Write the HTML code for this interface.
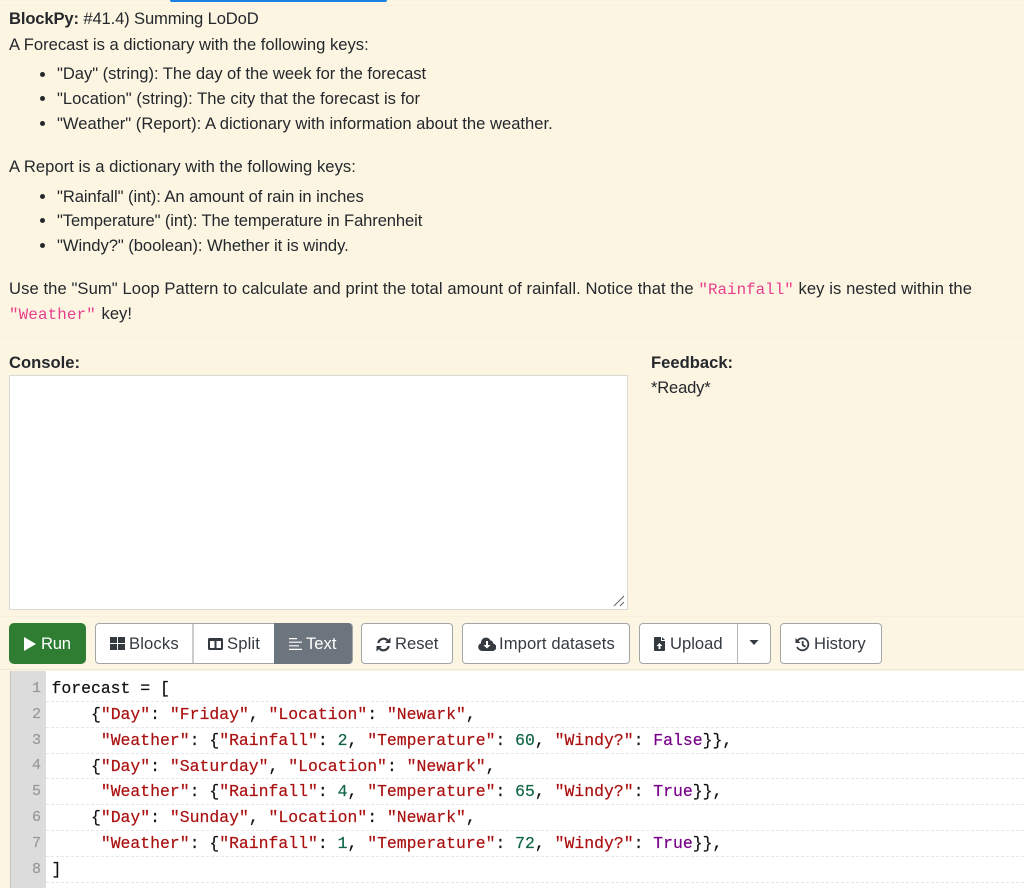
<!DOCTYPE html>
<html><head><meta charset="utf-8"><style>
html,body{margin:0;padding:0}
body{width:1024px;height:888px;position:relative;overflow:hidden;background:#fdf6e3;font-family:"Liberation Sans",sans-serif;font-size:16.6px;color:#24282c}
#bg{position:absolute;left:0;top:0;width:1024px;height:888px;background:#fcf5e2}
.t{position:absolute;white-space:pre;line-height:24px;height:24px}
.m{font-family:"Liberation Mono",monospace}
.c{color:#e83e8c;font-size:15.9px;letter-spacing:0}
.dot{position:absolute;width:5px;height:5px;border-radius:50%;background:#24282c;left:39.500px}
.hr{position:absolute;left:0;width:1024px;height:1px;background:#f8f0dc}
.btn{position:absolute;top:623px;height:41px;box-sizing:border-box;border:1px solid #a3a6a9;background:#fff;border-radius:4px}
.ln{position:absolute;left:0;width:978px;height:1px;background:repeating-linear-gradient(90deg,#e6e6e6 0 3px,#fff 3px 5px)}
.n{position:absolute;left:10px;width:31px;text-align:right;font:15px/26px "Liberation Mono",monospace;color:#999;-webkit-text-stroke:.2px #999}
.code{position:absolute;left:51.500px;white-space:pre;font:16.45px/26px "Liberation Mono",monospace;color:#111;-webkit-text-stroke:.2px currentColor}
.s{color:#a11}.i{color:#164}.k{color:#708}
</style></head><body>
<div id="bg"></div>
<div style="position:absolute;left:170px;top:0;width:217px;height:2px;background:#1a7fe0;border-radius:0 0 2px 2px"></div>
<div class="hr" style="top:5px"></div>
<div class="t" style="left:9px;top:7px;letter-spacing:-.14px"><b>BlockPy:</b> #41.4) Summing LoDoD</div>
<div class="t" style="left:9px;top:33px">A Forecast is a dictionary with the following keys:</div>
<div class="dot" style="top:71.500px"></div><div class="t" style="left:57px;top:62px;letter-spacing:-.04px">"Day" (string): The day of the week for the forecast</div>
<div class="dot" style="top:96px"></div><div class="t" style="left:57px;top:87px;letter-spacing:.02px">"Location" (string): The city that the forecast is for</div>
<div class="dot" style="top:120.500px"></div><div class="t" style="left:57px;top:112px">"Weather" (Report): A dictionary with information about the weather.</div>
<div class="t" style="left:9px;top:155px;letter-spacing:.04px">A Report is a dictionary with the following keys:</div>
<div class="dot" style="top:193.500px"></div><div class="t" style="left:57px;top:185px;letter-spacing:-.067px">"Rainfall" (int): An amount of rain in inches</div>
<div class="dot" style="top:218px"></div><div class="t" style="left:57px;top:209px;letter-spacing:-.12px">"Temperature" (int): The temperature in Fahrenheit</div>
<div class="dot" style="top:242.500px"></div><div class="t" style="left:57px;top:234px;letter-spacing:-.05px">"Windy?" (boolean): Whether it is windy.</div>
<div class="t" style="left:9px;top:277px;letter-spacing:.083px">Use the "Sum" Loop Pattern to calculate and print the total amount of rainfall. Notice that the <span class="m c">"Rainfall"</span> key is nested within the</div>
<div class="t" style="left:9px;top:302px"><span class="m c" style="letter-spacing:.12px">"Weather"</span><span style="margin-left:1px"> key!</span></div>
<div class="hr" style="top:337px"></div>
<div class="t" style="left:9px;top:351px"><b>Console:</b></div>
<div class="t" style="left:651px;top:351px"><b>Feedback:</b></div>
<div class="t" style="left:651px;top:376px;letter-spacing:-.2px">*Ready*</div>
<div style="position:absolute;left:9px;top:375px;width:619px;height:235px;box-sizing:border-box;background:#fff;border:1px solid #d8d8d4"></div>
<svg style="position:absolute;left:612px;top:594px" width="14" height="14" viewBox="0 0 14 14"><path d="M2 12L12 2M8 12L12 8" stroke="#666" stroke-width="1" fill="none"/></svg>
<div class="hr" style="top:616px"></div>

<div style="position:absolute;left:9px;top:623px;width:77px;height:41px;background:#2e7d32;border-radius:5px"></div>
<svg style="position:absolute;left:24px;top:637px" width="12" height="14" viewBox="0 0 12 14"><path d="M0 0L12 7L0 14Z" fill="#fff"/></svg>
<div class="t" style="left:41px;top:632px;color:#fff;letter-spacing:-.2px">Run</div>

<div class="btn" style="left:95px;width:258px"></div>
<div style="position:absolute;left:274px;top:623px;width:78px;height:41px;background:#6c757d;border-radius:0 4px 4px 0"></div>
<div style="position:absolute;left:192px;top:624px;width:2px;height:39px;background:#c9cdd0"></div>
<svg style="position:absolute;left:110px;top:637px" width="15" height="13" viewBox="0 0 15 13"><path d="M0 0h7v6H0zM8 0h7v6H8zM0 7h7v6H0zM8 7h7v6H8z" fill="#343a40"/></svg>
<div class="t" style="left:129px;top:632px;color:#343a40;letter-spacing:.15px">Blocks</div>
<svg style="position:absolute;left:208px;top:638px" width="15" height="12" viewBox="0 0 15 12"><path fill-rule="evenodd" d="M1.500 0h12A1.500 1.500 0 0 1 15 1.500v9a1.500 1.500 0 0 1-1.500 1.500h-12A1.500 1.500 0 0 1 0 10.500v-9A1.500 1.500 0 0 1 1.500 0zM2 3v7h4.500V3zM8.500 3v7H13V3z" fill="#343a40"/></svg>
<div class="t" style="left:227px;top:632px;color:#343a40;letter-spacing:.15px">Split</div>
<svg style="position:absolute;left:289px;top:638px" width="13" height="12" viewBox="0 0 13 12"><path d="M0 .6h8M0 4.200h13M0 7.800h10M0 11.400h13" stroke="#fff" stroke-width="1.200" fill="none"/></svg>
<div class="t" style="left:306px;top:632px;color:#fff">Text</div>

<div class="btn" style="left:361px;width:92px"></div>
<svg style="position:absolute;left:376px;top:637px" width="15" height="15" viewBox="0 0 15 15"><path d="M2.300 6A5.400 5.400 0 0 1 11.600 3.500M12.700 9A5.400 5.400 0 0 1 3.400 11.500" stroke="#343a40" stroke-width="2.200" fill="none"/><path d="M14.500 0.500V6H9zM.5 14.500V9H6z" fill="#343a40"/></svg>
<div class="t" style="left:395px;top:632px;color:#343a40">Reset</div>

<div class="btn" style="left:462px;width:168px"></div>
<svg style="position:absolute;left:478px;top:637px" width="18" height="14" viewBox="0 0 18 14"><path fill-rule="evenodd" d="M4 14A4 4 0 0 1 3 6.200 5 5 0 0 1 12.500 3.500 3 3 0 0 1 15.200 6.500 3.800 3.800 0 0 1 14 14zM8 4v4H5.500L9 11.500 12.500 8H10V4z" fill="#343a40"/></svg>
<div class="t" style="left:499px;top:632px;color:#343a40;letter-spacing:.1px">Import datasets</div>

<div class="btn" style="left:639px;width:132px"></div>
<div style="position:absolute;left:737px;top:624px;width:1px;height:39px;background:#b5b7b9"></div>
<svg style="position:absolute;left:654px;top:637px" width="11" height="14" viewBox="0 0 11 14"><path fill-rule="evenodd" d="M1 0h6v4h4v9a1 1 0 0 1-1 1H1a1 1 0 0 1-1-1V1a1 1 0 0 1 1-1zM8 0l3 3H8zM5.500 6L2.500 9h2v3h2V9h2z" fill="#343a40"/></svg>
<div class="t" style="left:670px;top:632px;color:#343a40">Upload</div>
<svg style="position:absolute;left:749px;top:640px" width="10" height="6" viewBox="0 0 10 6"><path d="M.5 0h9L5 5z" fill="#343a40"/></svg>

<div class="btn" style="left:780px;width:102px"></div>
<svg style="position:absolute;left:795px;top:637px" width="15" height="15" viewBox="0 0 15 15"><path d="M2.700 3.500A6 6 0 1 1 2 10M7.700 4v4l2.800 1.800" stroke="#343a40" stroke-width="1.800" fill="none"/><path d="M.5 1v5h5z" fill="#343a40"/></svg>
<div class="t" style="left:814px;top:632px;color:#343a40">History</div>

<div class="hr" style="top:669px;background:#eee8d5"></div>
<div style="position:absolute;left:10px;top:671px;width:1014px;height:217px;background:#fff"></div>
<div style="position:absolute;left:10px;top:671px;width:36px;height:217px;background:#dcdcdc;border-left:1px solid #c4c4c4;box-sizing:border-box"></div>
<div style="position:absolute;left:46px;top:0;width:978px;height:888px">
<div class="ln" style="top:700.500px"></div><div class="ln" style="top:726.500px"></div><div class="ln" style="top:752.500px"></div><div class="ln" style="top:778px"></div><div class="ln" style="top:804px"></div><div class="ln" style="top:830px"></div><div class="ln" style="top:856px"></div><div class="ln" style="top:882px"></div>
</div>
<div class="n" style="top:676px">1</div><div class="n" style="top:702px">2</div><div class="n" style="top:728px">3</div><div class="n" style="top:753px">4</div><div class="n" style="top:779px">5</div><div class="n" style="top:805px">6</div><div class="n" style="top:831px">7</div><div class="n" style="top:857px">8</div>
<div class="code" style="top:676px">forecast = [</div>
<div class="code" style="top:702px">    {<span class="s">"Day"</span>: <span class="s">"Friday"</span>, <span class="s">"Location"</span>: <span class="s">"Newark"</span>,</div>
<div class="code" style="top:728px">     <span class="s">"Weather"</span>: {<span class="s">"Rainfall"</span>: <span class="i">2</span>, <span class="s">"Temperature"</span>: <span class="i">60</span>, <span class="s">"Windy?"</span>: <span class="k">False</span>}},</div>
<div class="code" style="top:754px">    {<span class="s">"Day"</span>: <span class="s">"Saturday"</span>, <span class="s">"Location"</span>: <span class="s">"Newark"</span>,</div>
<div class="code" style="top:779px">     <span class="s">"Weather"</span>: {<span class="s">"Rainfall"</span>: <span class="i">4</span>, <span class="s">"Temperature"</span>: <span class="i">65</span>, <span class="s">"Windy?"</span>: <span class="k">True</span>}},</div>
<div class="code" style="top:805px">    {<span class="s">"Day"</span>: <span class="s">"Sunday"</span>, <span class="s">"Location"</span>: <span class="s">"Newark"</span>,</div>
<div class="code" style="top:831px">     <span class="s">"Weather"</span>: {<span class="s">"Rainfall"</span>: <span class="i">1</span>, <span class="s">"Temperature"</span>: <span class="i">72</span>, <span class="s">"Windy?"</span>: <span class="k">True</span>}},</div>
<div class="code" style="top:857px">]</div>
</body></html>
